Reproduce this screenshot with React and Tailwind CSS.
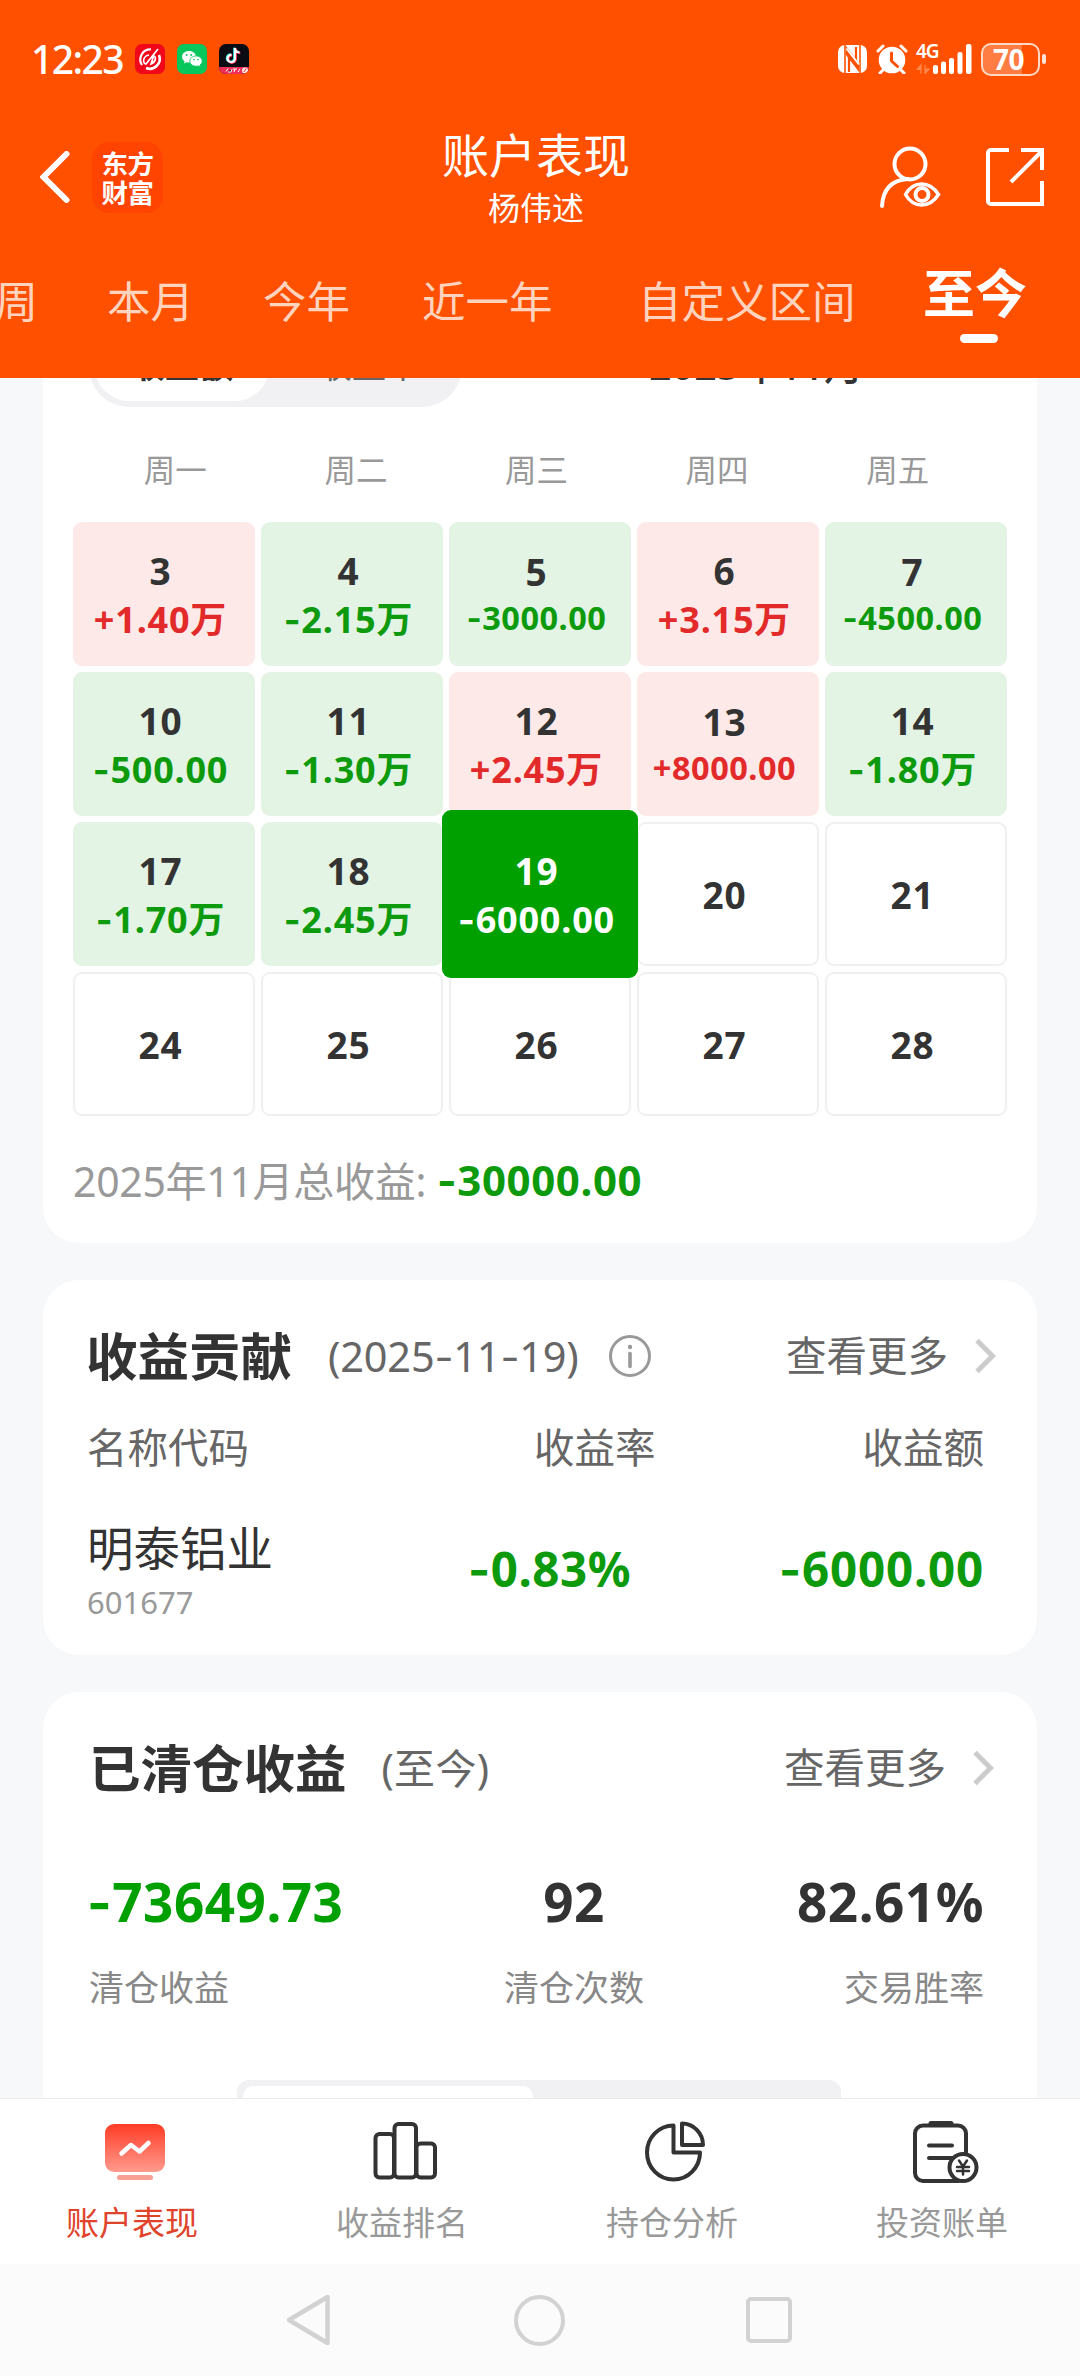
import React from "react";

const DAYS = [
  { d: "3", v: "+1.40万", t: "up" },
  { d: "4", v: "-2.15万", t: "down" },
  { d: "5", v: "-3000.00", t: "down", small: true },
  { d: "6", v: "+3.15万", t: "up" },
  { d: "7", v: "-4500.00", t: "down", small: true },
  { d: "10", v: "-500.00", t: "down" },
  { d: "11", v: "-1.30万", t: "down" },
  { d: "12", v: "+2.45万", t: "up" },
  { d: "13", v: "+8000.00", t: "up", small: true },
  { d: "14", v: "-1.80万", t: "down" },
  { d: "17", v: "-1.70万", t: "down" },
  { d: "18", v: "-2.45万", t: "down" },
  { d: "19", v: "-6000.00", t: "active" },
  { d: "20" },
  { d: "21" },
  { d: "24" },
  { d: "25" },
  { d: "26" },
  { d: "27" },
  { d: "28" },
];

/* Figures, with hyphens set in a face that has a wider stroke */
function Num({ children }) {
  return children.split(/(-)/).map((p, i) =>
    p === "-" ? (
      <span key={i} className="font-['Inter']">-</span>
    ) : (
      <React.Fragment key={i}>{p}</React.Fragment>
    )
  );
}

function StatusBar() {
  return (
    <div className="flex h-[118px] items-center pl-[31px] pr-[34px]">
      <span className="w-[104px] whitespace-nowrap text-[39px] font-medium leading-[60px] tracking-[-1.600px]">12:23</span>
      <svg className="size-[30px]" viewBox="0 0 30 30">
        <rect width="30" height="30" rx="7" fill="#f2061a" />
        <path d="M16 5.500A10 10 0 0 0 7 21" fill="none" stroke="#fff" strokeWidth="2.200" />
        <path d="M24 11a10 10 0 0 1-13 13" fill="none" stroke="#fff" strokeWidth="2.600" />
        <path d="M23 5 11 20c-4-1-3-8 3-9M18 12c4 0 3 6-2 8l3-9M13 17l5-5" fill="none" stroke="#fff" strokeWidth="1.700" />
      </svg>
      <svg className="ml-3 size-[30px]" viewBox="0 0 30 30">
        <rect width="30" height="30" rx="7" fill="#06c65c" />
        <path d="M12 7C8 7 5 9.600 5 12.800c0 1.900 1 3.400 2.600 4.400L7 19.500l2.600-1.300c.8.200 1.600.3 2.400.3 4 0 7-2.500 7-5.700S16 7 12 7z" fill="#fff" />
        <path d="M19 12c-3.500 0-6.200 2.300-6.200 5.100s2.700 5.100 6.200 5.100c.8 0 1.500-.1 2.200-.3l2.300 1.100-.6-2c1.400-.9 2.300-2.300 2.300-3.900 0-2.800-2.700-5.100-6.200-5.100z" fill="#fff" stroke="#06c65c" strokeWidth=".8" />
        <circle cx="9.700" cy="11" r=".9" fill="#06c65c" />
        <circle cx="14.200" cy="11" r=".9" fill="#06c65c" />
        <circle cx="17" cy="15.600" r=".8" fill="#06c65c" />
        <circle cx="21" cy="15.600" r=".8" fill="#06c65c" />
      </svg>
      <svg className="ml-3 size-[30px]" viewBox="0 0 30 30">
        <defs>
          <clipPath id="tk"><rect width="30" height="30" rx="7" /></clipPath>
        </defs>
        <g clipPath="url(#tk)">
          <rect width="30" height="30" fill="#0b0b14" />
          <rect y="23" width="30" height="7" fill="#ee2e58" />
          <path d="M16 4v10.500a3.700 3.700 0 1 1-3.500-3.700M16 4c.3 2.800 2 4.300 4.600 4.500" fill="none" stroke="#25f4ee" strokeWidth="2.300" transform="translate(-.7 -.3)" />
          <path d="M16 4v10.500a3.700 3.700 0 1 1-3.500-3.700M16 4c.3 2.800 2 4.300 4.600 4.500" fill="none" stroke="#fe2c55" strokeWidth="2.300" transform="translate(.7 .6)" />
          <path d="M16 4v10.500a3.700 3.700 0 1 1-3.500-3.700M16 4c.3 2.800 2 4.300 4.600 4.500" fill="none" stroke="#fff" strokeWidth="2.200" />
          <path d="M7 27.500l2-3M9 28h3l1-3M14 25h4M15 28l1-3M19 28l2-3" stroke="#fff" strokeWidth="1" />
          <circle cx="26" cy="26.500" r="3" fill="#ffe9dc" />
          <path d="M25 28l2-3.500" stroke="#ee2e58" strokeWidth="1" />
        </g>
      </svg>
      <div className="ml-auto flex items-center">
        <svg className="h-[28px] w-[29px]" viewBox="0 0 29 28">
          <rect width="29" height="28" rx="7" fill="#fff" />
          <path d="M7 0v28M22 0v28" stroke="#ff5000" strokeWidth="1.600" />
          <path d="M8 1l13 17V27L8 10z" fill="#ff5000" />
          <path d="M11 27V9M18 2v15" stroke="#ff5000" strokeWidth="2.200" />
          <path d="M8.500 3.500 21 19.500" stroke="#fff" strokeWidth="2" />
        </svg>
        <svg className="ml-[9px] h-[30px] w-[32px]" viewBox="0 0 32 30">
          <circle cx="16" cy="16" r="13.300" fill="#fff" />
          <path d="M2 7l5-5M30 7l-5-5M7 26l-3 3M25 26l3 3" stroke="#fff" strokeWidth="3" strokeLinecap="round" />
          <path d="M15.500 9v8l6 5.500" fill="none" stroke="#ff5000" strokeWidth="3" strokeLinecap="round" strokeLinejoin="round" />
        </svg>
        <div className="relative ml-[8px] h-[30px] w-[57px]">
          <span className="absolute left-0 top-[-4px] text-[19px] font-semibold leading-[22px] tracking-[-1px]">4G</span>
          <svg className="h-[30px] w-[57px]" viewBox="0 0 57 30">
            <path d="M5 29.500V21M5 21l-4 4.500h4zM9 21v8.500M9 29.500l4-4.500H9z" fill="#ff8a50" stroke="#ff8a50" strokeWidth="1.200" />
            <g fill="#fff">
              <rect x="17" y="21" width="5" height="9" rx="2" />
              <rect x="25" y="17.500" width="5" height="12.500" rx="2" />
              <rect x="33" y="14" width="5" height="16" rx="2" />
              <rect x="41.500" y="8" width="5" height="22" rx="2" />
              <rect x="50" y="0" width="5.500" height="30" rx="2" />
            </g>
          </svg>
        </div>
        <div className="ml-[8px] flex items-center">
          <div className="flex h-[33px] w-[59px] items-center justify-center rounded-[10px] border-[2.500px] border-[#ffd9c6] bg-linear-to-r from-[#ff7d42] from-70% to-[#ff5000] to-70% pr-1 text-[28px] font-bold leading-[30px] tracking-[-0.500px]">70</div>
          <div className="ml-[2px] h-[10px] w-[4px] rounded-[2px] bg-[#ffe4d6]" />
        </div>
      </div>
    </div>
  );
}

function Header() {
  return (
    <header className="h-[378px] overflow-hidden bg-[#ff5000] text-white">
      <StatusBar />
      <div className="grid h-[118px] grid-cols-[1fr_auto_1fr] items-center pl-10 pr-9">
        <div className="flex items-center">
          <svg className="h-[52px] w-[30px]" viewBox="0 0 30 52">
            <path d="M26.500 3 3.500 26l23 23" fill="none" stroke="#fff" strokeWidth="6" strokeLinecap="round" />
          </svg>
          <div className="ml-[22px] flex size-[71px] flex-col items-center justify-center rounded-[17px] bg-[#ff4300] font-['Noto_Sans_CJK_SC',sans-serif] text-[26.500px] font-bold leading-[29.500px] tracking-[-0.500px]">
            <span>东方</span>
            <span>财富</span>
          </div>
        </div>
        <div className="-ml-[12px] flex flex-col items-center pt-[7px]">
          <h1 className="text-[47px] font-normal leading-[54px]">账户表现</h1>
          <span className="text-[32px] leading-[52px]">杨伟述</span>
        </div>
        <div className="flex items-center justify-end">
          <svg className="h-[62px] w-[64px]" viewBox="0 0 64 62" fill="none" stroke="#fff" strokeWidth="4">
            <circle cx="31" cy="18" r="15.500" />
            <path d="M3 60C4 43 13 34 29 33" strokeLinecap="round" />
            <path d="M26.500 48.500c4-7 9.500-10.500 16-10.500s12.500 3.500 17 10.500c-4.500 7-10.500 10.500-17 10.500s-12-3.500-16-10.500z" strokeWidth="3.500" />
            <circle cx="43" cy="48.500" r="6.500" />
          </svg>
          <svg className="ml-[43px] h-[58px] w-[58px]" viewBox="0 0 58 58" fill="none" stroke="#fff" strokeWidth="4">
            <path d="M23 2H5a3 3 0 0 0-3 3v48a3 3 0 0 0 3 3h51V33M35 2h21v20M25 34 55 4" />
          </svg>
        </div>
      </div>
      <nav className="flex items-start whitespace-nowrap pt-[33px] text-[43.500px] leading-[64px] text-[#ffd3bd]">
        <span className="-ml-[49px] w-[156px]">本周</span>
        <span className="w-[156px]">本月</span>
        <span className="w-[159px]">今年</span>
        <span className="w-[216px]">近一年</span>
        <span className="w-[285px]">自定义区间</span>
        <div className="-mt-[9px] flex flex-col items-center">
          <span className="text-[52px] font-bold leading-[66px] text-white">至今</span>
          <div className="mt-[8px] ml-[8px] h-[9px] w-[38px] rounded-full bg-white" />
        </div>
      </nav>
    </header>
  );
}

const CELL = {
  up: "bg-[#fde9e8] text-[#e22a2a]",
  down: "bg-[#e3f4e5] text-[#0d9a0d]",
  active: "z-10 -mx-[7px] -my-3 bg-[#00a000] text-white",
  none: "border-2 border-[#f0f0f0]",
};

function Day({ d, v, t = "none", small }) {
  const dayColor = t === "active" ? "text-white" : "text-[#333]";
  return (
    <div className={`relative flex flex-col items-center justify-center rounded-[9px] pr-[7px] pt-[2px] font-bold ${CELL[t]}`}>
      <span className={`text-[37px] tracking-[0.800px] ${small ? "leading-[46px]" : "leading-[50px]"} ${dayColor}`}>{d}</span>
      {v && (
        <span className={`whitespace-nowrap ${small ? "text-[32.500px] leading-[46px] tracking-[0.500px]" : "text-[36px] leading-[48px] tracking-[0.800px]"}`}>
          <Num>{v}</Num>
        </span>
      )}
    </div>
  );
}

function CalendarCard() {
  return (
    <section className="-mt-[60px] h-[925px] rounded-b-[36px] bg-white px-[30px]">
      <div className="flex h-[98px] items-center justify-between pl-[16px] pr-[107px]">
        <div className="flex h-[80px] w-[373px] rounded-full bg-[#f1f1f4] p-[6px] text-[34px] leading-[64px]">
          <span className="w-[174px] rounded-full bg-white text-center font-bold text-[#333]">收益额</span>
          <span className="w-[187px] pl-[49px] text-[#666]">收益率</span>
        </div>
        <span className="w-[251px] -mt-[5px] whitespace-nowrap text-[39.500px] font-medium leading-[68px] text-[#333]">2025年11月</span>
      </div>
      <div className="mt-[28px] ml-[12px] grid w-[903px] grid-cols-5 text-center text-[31.500px] leading-[52px] text-[#999]">
        {["周一", "周二", "周三", "周四", "周五"].map((w) => (
          <span key={w}>{w}</span>
        ))}
      </div>
      <div className="mt-[26px] grid w-[934px] auto-rows-[144px] grid-cols-5 gap-[6px]">
        {DAYS.map((x) => (
          <Day key={x.d} {...x} />
        ))}
      </div>
      <div className="mt-[34px] flex items-center leading-[60px]">
        <span className="text-[41px] tracking-[-0.300px] text-[#999]">2025年11月总收益:</span>
        <span className="ml-[11px] text-[42px] font-bold tracking-[0.600px] text-[#0d9a0d]"><Num>-30000.00</Num></span>
      </div>
    </section>
  );
}

function More() {
  return (
    <div className="ml-auto flex items-center text-[40.500px] text-[#666]">
      查看更多
      <svg className="ml-[27px] h-[36px] w-[21px]" viewBox="0 0 21 36">
        <path d="M2 2.500 17.500 18 2 33.500" fill="none" stroke="#ccc" strokeWidth="5" />
      </svg>
    </div>
  );
}

function ContributionCard() {
  return (
    <section className="mt-[37px] h-[375px] rounded-[36px] bg-white pl-[44px] pr-[53px] pt-[46px]">
      <div className="-mr-[12px] flex h-[60px] items-center leading-[60px]">
        <h2 className="-ml-px text-[51.500px] font-bold text-[#333]">收益贡献</h2>
        <span className="ml-[36px] whitespace-nowrap text-[41.500px] tracking-[-0.200px] text-[#666]"><Num>(2025-11-19)</Num></span>
        <svg className="ml-[30px] size-[42px]" viewBox="0 0 42 42">
          <circle cx="21" cy="21" r="19.500" fill="none" stroke="#999" strokeWidth="3" />
          <circle cx="21" cy="12" r="2.200" fill="#999" />
          <path d="M21 18.500v13" stroke="#999" strokeWidth="3.600" strokeLinecap="round" />
        </svg>
        <More />
      </div>
      <div className="mt-[32px] flex text-[40.500px] leading-[60px] text-[#666]">
        <span className="w-[447px]">名称代码</span>
        <span>收益率</span>
        <span className="ml-auto">收益额</span>
      </div>
      <div className="mt-[38px] flex items-center justify-between">
        <div className="flex w-[300px] flex-col">
          <span className="text-[46.500px] leading-[64px] text-[#333]">明泰铝业</span>
          <span className="text-[31px] leading-[44px] text-[#999]">601677</span>
        </div>
        <span className="-mt-[1px] w-[244px] text-right text-[47.500px] font-bold leading-[60px] tracking-[0.500px] text-[#0d9a0d]"><Num>-0.83%</Num></span>
        <span className="-mt-[1px] w-[353px] text-right text-[47.500px] font-bold leading-[60px] tracking-[0.800px] text-[#0d9a0d]"><Num>-6000.00</Num></span>
      </div>
    </section>
  );
}

function ClearedCard() {
  return (
    <section className="mt-[37px] h-[406px] rounded-t-[36px] bg-white pl-[46px] pr-[53px] pt-[46px]">
      <div className="-mr-[10px] flex h-[60px] items-center leading-[60px]">
        <h2 className="text-[51.500px] font-bold text-[#333]">已清仓收益</h2>
        <span className="ml-[35px] text-[41px] tracking-[0.300px] text-[#666]">(至今)</span>
        <More />
      </div>
      <div className="mt-[69px] grid grid-cols-[300px_1fr_300px] text-[53px] font-bold leading-[70px] tracking-[0.500px] text-[#333]">
        <span className="-ml-[2px] text-[#00a000]"><Num>-73649.73</Num></span>
        <span className="pl-[79px]">
          <span className="block w-[212px] text-center">92</span>
        </span>
        <span className="text-right">82.61%</span>
      </div>
      <div className="mt-[24px] grid grid-cols-[300px_1fr_300px] text-[35px] leading-[52px] text-[#888]">
        <span>清仓收益</span>
        <span className="pl-[79px]">
          <span className="block w-[212px] text-center">清仓次数</span>
        </span>
        <span className="text-right">交易胜率</span>
      </div>
      <div className="mt-[66px] ml-[148px] flex h-[30px] w-[604px] rounded-t-[12px] bg-[#f1f1f4] px-[6px] pt-[6px]">
        <div className="w-[290px] rounded-t-[11px] bg-white" />
      </div>
    </section>
  );
}

function BottomNav() {
  const ink = { fill: "none", stroke: "#333", strokeWidth: 4 };
  const items = [
    [
      "账户表现",
      <svg key="a" className="size-[70px]" viewBox="0 0 70 70">
        <defs>
          <linearGradient id="g" x1="0" y1="0" x2="0" y2="1">
            <stop offset="0" stopColor="#ff3c25" />
            <stop offset="1" stopColor="#ff9b8e" />
          </linearGradient>
        </defs>
        <rect x="5" y="7" width="60" height="48" rx="9" fill="url(#g)" />
        <rect x="17" y="58" width="36" height="5" rx="2.500" fill="#f9a095" />
        <path d="M21.500 36.500 31 28l8.500 6.500L48.500 26" fill="none" stroke="#fff" strokeWidth="4.500" strokeLinecap="round" strokeLinejoin="round" />
      </svg>,
    ],
    [
      "收益排名",
      <svg key="b" className="size-[70px]" viewBox="0 0 70 70" {...ink}>
        <rect x="5.500" y="17" width="18.500" height="43.500" rx="4" />
        <rect x="24.500" y="7" width="21.500" height="53.500" rx="4" />
        <rect x="46.500" y="26.500" width="18.500" height="34" rx="4" />
      </svg>,
    ],
    [
      "持仓分析",
      <svg key="c" className="size-[70px]" viewBox="0 0 70 70" {...ink} strokeLinejoin="round">
        <path d="M33.500 8.500A26.500 27 0 1 0 60 35.500H33.500z" />
        <path d="M42 6.500a21 21.500 0 0 1 21 21.500H42z" />
      </svg>,
    ],
    [
      "投资账单",
      <svg key="d" className="size-[70px]" viewBox="0 0 70 70" {...ink} strokeLinecap="round">
        <rect x="5" y="8.500" width="51" height="55.500" rx="8" />
        <path d="M21 6.500h20" strokeWidth="5" />
        <path d="M19 28.500h23M19 41h23" />
        <circle cx="53" cy="50.500" r="13.500" fill="#fff" />
        <path d="M49 43.500l4 6 4-6M53 49.500v8M47 50h12M47 54h12" strokeWidth="2.500" />
      </svg>,
    ],
  ];
  return (
    <nav className="grid h-[166px] grid-cols-4 border-t border-[#e9e9e9] bg-white pt-[18px]">
      {items.map(([label, icon], i) => (
        <div key={label} className="flex flex-col items-center">
          {icon}
          <span className={`mt-[11px] pr-[6px] text-[33px] leading-[50px] ${i === 0 ? "text-[#e0432b]" : "text-[#999]"}`}>{label}</span>
        </div>
      ))}
    </nav>
  );
}

function SystemBar() {
  return (
    <div className="flex h-[112px] items-center bg-[#fbfbfb] pl-[284px]">
      <svg className="h-[56px] w-[49px]" viewBox="0 0 49 56">
        <path d="M5 28 43.500 5v46z" fill="none" stroke="#d2d2d2" strokeWidth="4.500" strokeLinejoin="round" />
      </svg>
      <div className="ml-[181px] size-[51px] rounded-full border-[4.500px] border-[#d2d2d2]" />
      <div className="ml-[181px] size-[46px] rounded-[5px] border-[4.500px] border-[#d2d2d2]" />
    </div>
  );
}

export default function App() {
  return (
    <div className="flex h-[2376px] w-[1080px] flex-col overflow-hidden bg-[#f7f8fa] font-['Noto_Sans','Noto_Sans_CJK_SC',sans-serif]">
      <div className="relative z-20">
        <Header />
      </div>
      <main className="h-[1720px] overflow-hidden px-[43px]">
        <CalendarCard />
        <ContributionCard />
        <ClearedCard />
      </main>
      <BottomNav />
      <SystemBar />
    </div>
  );
}
